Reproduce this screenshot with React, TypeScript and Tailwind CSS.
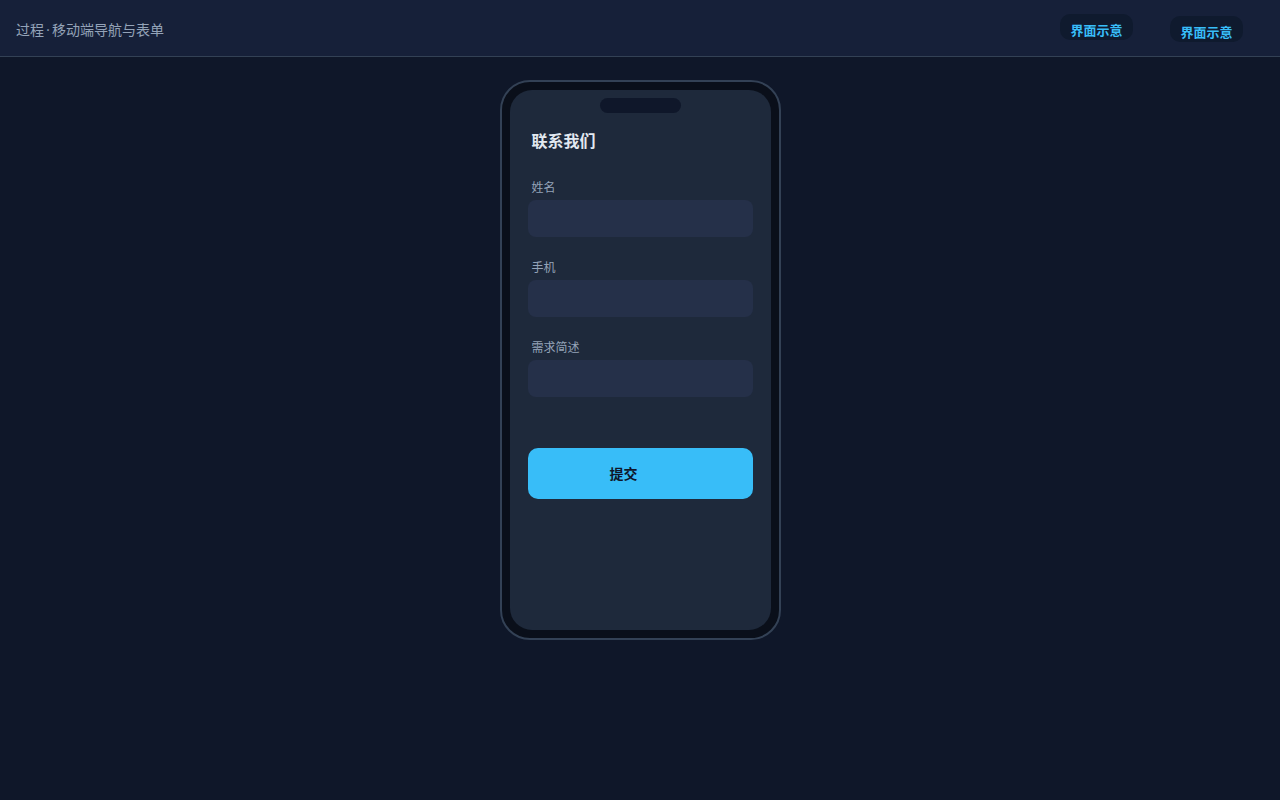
import React from "react";

const font = { fontFamily: 'Inter, "Noto Sans CJK SC", "Noto Sans", sans-serif' };

function Field({ label }: { label: string }) {
  return (
    <div className="flex flex-col">
      <div className="px-1 text-[12px] leading-[20px] text-[#94a3b8]">{label}</div>
      <div className="mt-[2px] h-[37px] rounded-[8px] bg-[#253049]" />
    </div>
  );
}

export default function App() {
  return (
    <div className="min-h-[800px] w-full bg-[#0f1729]" style={font}>
      <header className="flex h-[57px] items-start justify-between border-b border-[#334155] bg-[#162039] pl-4 pr-[37px]">
        <div className="mt-[20px] text-[14px] leading-[20px] text-[#94a3b8]">
          过程<span className="mx-[2px]">·</span>移动端导航与表单
        </div>
        <div className="flex items-start gap-[37px]">
          <div className="mt-[14px] flex h-[26px] w-[73px] items-center justify-center rounded-[10px] bg-[#0f1a2e] pt-[5px] text-[13px] font-bold leading-[20px] text-[#38bdf8]">
            界面示意
          </div>
          <div className="mt-[16px] flex h-[26px] w-[73px] items-center justify-center rounded-[10px] bg-[#0f1a2e] pt-[5px] text-[13px] font-bold leading-[20px] text-[#38bdf8]">
            界面示意
          </div>
        </div>
      </header>
      <div className="flex justify-center pt-[23px]">
        <div className="h-[560px] w-[281px] rounded-[30px] border-2 border-[#334155] bg-[#0a0f1a] p-2">
          <div className="flex h-full flex-col rounded-[22px] bg-[#1e293b] px-[18px]">
            <div className="mx-auto mt-2 h-[15px] w-[81px] rounded-full bg-[#0f172a]" />
            <div className="mt-[16px] px-1 text-[16px] font-bold leading-[24px] text-[#e2e8f0]">联系我们</div>
            <div className="mt-[25px] flex flex-col gap-[21px]">
              <Field label="姓名" />
              <Field label="手机" />
              <Field label="需求简述" />
            </div>
            <button className="mt-[51px] flex h-[51px] items-center rounded-[10px] bg-[#38bdf8] pl-[82px] text-[14px] font-bold text-[#0f172a]">
              提交
            </button>
          </div>
        </div>
      </div>
    </div>
  );
}
